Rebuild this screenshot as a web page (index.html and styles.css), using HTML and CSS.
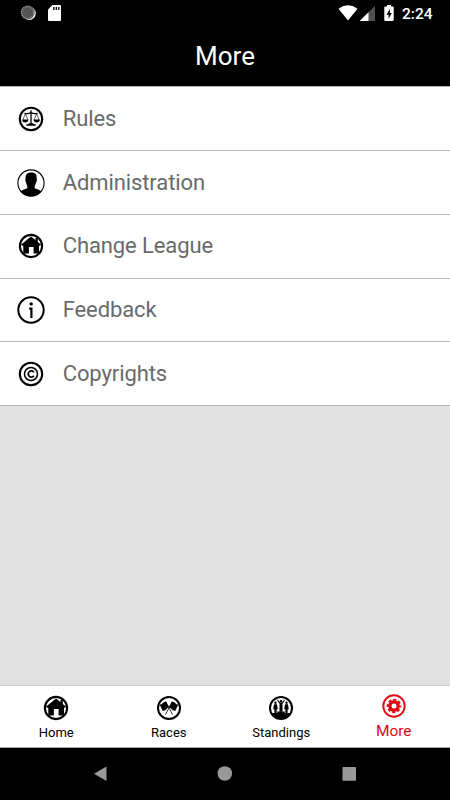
FILE: index.html
```html
<!DOCTYPE html>
<html lang="en">
<head>
<meta charset="utf-8">
<title>More</title>
<link rel="stylesheet" href="styles.css">
</head>
<body>
<svg class="defs" aria-hidden="true">
  <symbol id="house" viewBox="0 0 30 30">
    <circle cx="15" cy="15" r="11.1" fill="none" stroke="currentColor" stroke-width="2.1"/>
    <path d="M15 5.400 19.500 9V7h2.300v3.900L24.800 13.400l-.6 1.300H23v7.800H17.600v-6.500H12.900v6.500H7.300v-7.800H5.800l-.6-1.300z" fill="currentColor"/>
  </symbol>
</svg>
<header class="top">
  <div class="status">
    <svg class="status-left" width="70" height="26" viewBox="0 0 70 26">
      <circle cx="29.2" cy="13.3" r="6.6" fill="#fff"/>
      <circle cx="27.7" cy="12.5" r="7" fill="#555"/>
      <circle cx="27.7" cy="12.5" r="6" fill="none" stroke="#999" stroke-width="1.6" stroke-dasharray="1 1.1"/>
      <circle cx="27.7" cy="12.5" r="5.200" fill="#555"/>
      <path d="M52.5 5H60q1 0 1 1v14q0 1-1 1H49q-1 0-1-1V9.5z" fill="#fff"/>
      <path d="M53.800 7v3M56.300 7v3M58.800 7v3" stroke="#000" stroke-width="1.300"/>
    </svg>
    <svg class="status-right" width="60" height="26" viewBox="0 0 60 26">
      <path d="M.5 8.700Q10 1.800 19.500 8.700L10 20.600z" fill="#fff"/>
      <path d="M37 5.700V21H21.700z" fill="#505050"/>
      <path d="M30.500 12.200V21h-8.800z" fill="#fff"/>
      <path d="M49 5h4v1.600h1.800q.9 0 .9.9V20q0 1-1 1h-7.400q-1 0-1-1V7.500q0-.9.9-.9H49z" fill="#fff"/>
      <path d="M52 8.800 48.500 14.700h2.100v4.100L53.800 13h-2z" fill="#000"/>
    </svg>
    <span class="time">2:24</span>
  </div>
  <h1>More</h1>
</header>
<main class="list">
  <div class="row">
    <svg class="icon" viewBox="0 0 30 30">
      <circle cx="15" cy="15" r="11.200" fill="none" stroke="currentColor" stroke-width="2.100"/>
      <path d="M15 6.300v14M8.500 9.300q3.500 1 6.500-.8 3 1.800 6.500.8M10.300 21h9.400" fill="none" stroke="currentColor" stroke-width="1.300"/>
      <path d="M9.300 9.500 7 15.800M9.300 9.500 11.800 15.800M20.700 9.500 18.200 15.800M20.700 9.500 23 15.800" stroke="currentColor" stroke-width=".6"/>
      <path d="M6 15.500h6.400q-.5 3-3.200 3T6 15.500zM17.600 15.500h6.400q-.5 3-3.200 3T17.600 15.500zM13 19.300h4l1.500 1.700h-7z" fill="currentColor"/>
    </svg>
    <span>Rules</span>
  </div>
  <div class="row">
    <svg class="icon" viewBox="0 0 30 30">
      <circle cx="15" cy="15" r="13.100" fill="none" stroke="currentColor" stroke-width="1.100"/>
      <path d="M15.200 4.500C18.800 4.300 20.900 6.200 20.600 9.600L20.900 12.500 19.900 15Q19.500 17 18.700 18V20.300Q23.500 21.500 25.500 23.500 20.900 28.300 15 28.300T4.500 23.500Q6.500 21.500 11.300 20.300V18Q10.500 17 10.200 15L9.300 12.500 9.600 9.600C9.500 6.500 11.500 4.500 15.200 4.500z" fill="currentColor"/>
    </svg>
    <span>Administration</span>
  </div>
  <div class="row">
    <svg class="icon"><use href="#house"/></svg>
    <span>Change League</span>
  </div>
  <div class="row">
    <svg class="icon" viewBox="0 0 30 30">
      <circle cx="15" cy="15" r="12.700" fill="none" stroke="currentColor" stroke-width="2"/>
      <circle cx="15.200" cy="8.900" r="1.700" fill="currentColor"/>
      <path d="M13.200 13.700h2.200v9.200" fill="none" stroke="currentColor" stroke-width="2.200"/>
    </svg>
    <span>Feedback</span>
  </div>
  <div class="row">
    <svg class="icon" viewBox="0 0 30 30">
      <circle cx="15" cy="15" r="11.200" fill="none" stroke="currentColor" stroke-width="2.100"/>
      <circle cx="15" cy="15" r="6.500" fill="none" stroke="currentColor" stroke-width="1.500"/>
      <path d="M17.800 13.300A3 3.200 0 1 0 17.800 16.700" fill="none" stroke="currentColor" stroke-width="1.800"/>
    </svg>
    <span>Copyrights</span>
  </div>
</main>
<nav class="tabs">
  <div class="tab">
    <svg class="icon"><use href="#house"/></svg>
    <span>Home</span>
  </div>
  <div class="tab">
    <svg class="icon" viewBox="0 0 30 30">
      <circle cx="15" cy="15" r="11" fill="none" stroke="currentColor" stroke-width="2"/>
      <path d="M12.300 8.500 15 14.200Q13.200 14.600 12.600 16T8.800 18L5.600 11.500Q8 11.500 8.800 10T12.300 8.500zM17.700 8.500 15 14.200Q16.800 14.600 17.400 16T21.200 18L24.400 11.500Q22 11.500 21.200 10T17.700 8.500z" fill="currentColor"/>
      <path d="M13.500 12 18.500 21.500M16.500 12 11.500 21.500" stroke="currentColor" stroke-width=".8"/>
    </svg>
    <span>Races</span>
  </div>
  <div class="tab">
    <svg class="icon" viewBox="0 0 30 30">
      <circle cx="15" cy="15" r="11" fill="none" stroke="currentColor" stroke-width="2"/>
      <path d="M4.500 20h6.700v-1.500h7.600V20h6.700Q22.500 26.200 15 26.200T4.500 20z" fill="currentColor"/>
      <g fill="currentColor"><circle cx="9.500" cy="9.800" r="1.200"/><circle cx="15" cy="8.300" r="1.200"/><circle cx="20.500" cy="9.800" r="1.200"/></g>
      <path d="M8 11.300h3l.8 5h-1.100l-.2 4h-2l-.2-4H7.200zM19 11.300h3l.8 5h-1.100l-.2 4h-2l-.2-4h-1.100zM11.800 6.500 14 9.500h2l2.200-3 .7.700-2.400 3.600v8h-3v-8l-2.400-3.600z" fill="currentColor"/>
    </svg>
    <span>Standings</span>
  </div>
  <div class="tab active">
    <svg class="icon" viewBox="0 0 30 30">
      <circle cx="15" cy="15" r="10.700" fill="none" stroke="currentColor" stroke-width="1.900"/>
      <circle cx="15" cy="15" r="4.200" fill="none" stroke="currentColor" stroke-width="3.400"/>
      <circle cx="15" cy="15" r="6.300" fill="none" stroke="currentColor" stroke-width="2" stroke-dasharray="2.900 2.048" stroke-dashoffset="1.450"/>
    </svg>
    <span>More</span>
  </div>
</nav>
<footer class="system">
  <svg width="450" height="52" viewBox="0 0 450 52" fill="#999">
    <path d="M94 25.700 106.500 18.500V33z"/>
    <circle cx="224.800" cy="25.500" r="7.300"/>
    <rect x="342.500" y="19" width="13.500" height="13.800" rx=".8"/>
  </svg>
</footer>
</body>
</html>
```
FILE: styles.css
```css
* { box-sizing: border-box; }
body {
  margin: 0;
  width: 450px;
  height: 800px;
  display: flex;
  flex-direction: column;
  background: #e1e1e1;
  font-family: Roboto, sans-serif;
  overflow: hidden;
}
.defs { display: none; }
.top {
  height: 87.4px;
  background: #000;
  color: #fff;
  border-bottom: 1px solid #b5b5b5;
}
.status {
  height: 26px;
  display: flex;
  align-items: center;
}
.status-right { margin-left: 268px; }
.time {
  margin-left: 4px;
  padding-top: 2px;
  font-size: 15.5px;
  font-weight: 500;
  line-height: 24px;
}
h1 {
  margin: 0;
  font-size: 26px;
  font-weight: 400;
  line-height: 60px;
  text-align: center;
}
.list { flex: 1; }
.row {
  height: 63.75px;
  display: flex;
  align-items: center;
  gap: 16.7px;
  padding-left: 16px;
  background: #fff;
  border-bottom: 1px solid #b8b8b8;
  color: #6a6a6a;
  font-size: 22px;
  letter-spacing: -.1px;
  line-height: 30px;
}
.icon {
  width: 30px;
  height: 30px;
  color: #000;
}
.tabs {
  height: 63px;
  display: grid;
  grid-template-columns: repeat(4, 1fr);
  background: #fff;
  border-top: 1px solid #ccc;
  border-bottom: 1px solid #aaa;
}
.tab {
  display: flex;
  flex-direction: column;
  align-items: center;
  padding-top: 7px;
  font-size: 13px;
  line-height: 19px;
}
.tab.active {
  padding-top: 5px;
  color: #e20a12;
  font-size: 15.5px;
  line-height: 21px;
}
.active .icon { color: inherit; }
.system {
  height: 52px;
  background: #000;
}
.system svg { display: block; }
```
